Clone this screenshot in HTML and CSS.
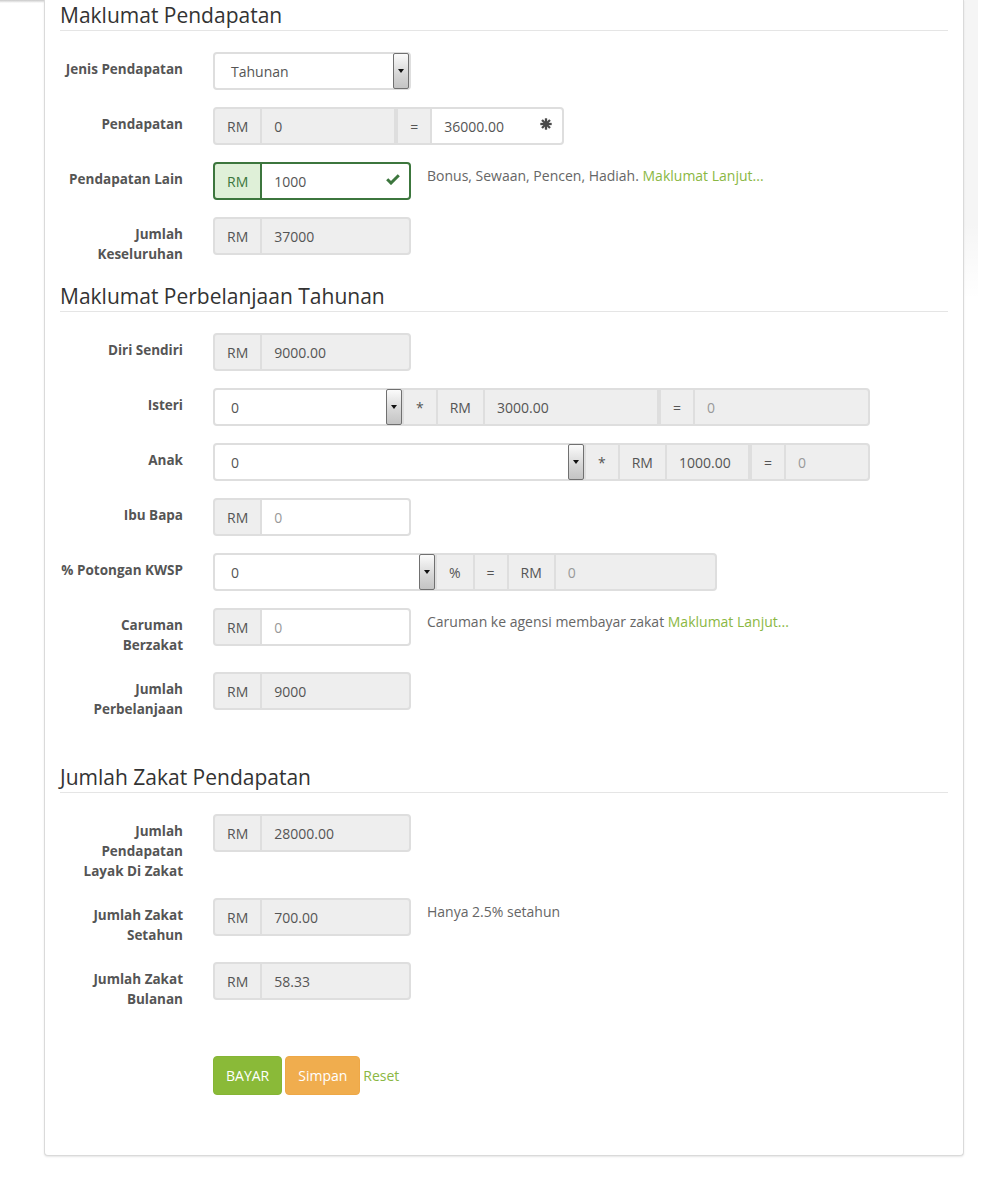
FILE: index.html
```html
<!DOCTYPE html>
<html lang="ms">
<head>
<meta charset="utf-8">
<title>Kalkulator Zakat Pendapatan</title>
<link rel="stylesheet" href="styles.css">
</head>
<body>
<div class="topshade"></div>
<div class="sideshade"></div>
<div class="panel">
  <form class="form">
    <section class="fs">
      <h2 class="legend">Maklumat Pendapatan</h2>

      <div class="row">
        <label class="lbl">Jenis Pendapatan</label>
        <div class="ig w198">
          <div class="seg sel grow"><span>Tahunan</span><span class="dd"><i class="tri"></i></span></div>
        </div>
      </div>

      <div class="row">
        <label class="lbl">Pendapatan</label>
        <div class="ig w351">
          <span class="seg addon">RM</span>
          <span class="seg inp ro i134">0</span>
          <span class="seg addon split">=</span>
          <span class="seg inp grow has-icon">36000.00<span class="ico"><svg width="12" height="12" viewBox="0 0 12 12"><g stroke="#4a4a4a" stroke-width="2.3"><line x1="6" y1="0.3" x2="6" y2="11.7"/><line x1="0.3" y1="6" x2="11.7" y2="6"/><line x1="2" y1="2" x2="10" y2="10"/><line x1="10" y1="2" x2="2" y2="10"/></g></svg></span></span>
        </div>
      </div>

      <div class="row">
        <label class="lbl">Pendapatan Lain</label>
        <div class="ig w198 ok">
          <span class="seg addon">RM</span>
          <span class="seg inp grow has-icon">1000<span class="ico"><svg width="14" height="12" viewBox="0 0 14 12"><path d="M1.2 6.2 L5 10 L12.8 2.2" stroke="#3c763d" stroke-width="3" fill="none"/></svg></span></span>
        </div>
        <p class="help">Bonus, Sewaan, Pencen, Hadiah. <a href="#">Maklumat Lanjut...</a></p>
      </div>

      <div class="row">
        <label class="lbl">Jumlah<br>Keseluruhan</label>
        <div class="ig w198">
          <span class="seg addon">RM</span>
          <span class="seg inp ro grow">37000</span>
        </div>
      </div>
    </section>

    <section class="fs">
      <h2 class="legend">Maklumat Perbelanjaan Tahunan</h2>

      <div class="row">
        <label class="lbl">Diri Sendiri</label>
        <div class="ig w198">
          <span class="seg addon">RM</span>
          <span class="seg inp ro grow">9000.00</span>
        </div>
      </div>

      <div class="row">
        <label class="lbl">Isteri</label>
        <div class="ig w657">
          <div class="seg sel s191"><span>0</span><span class="dd"><i class="tri"></i></span></div>
          <span class="seg addon">*</span>
          <span class="seg addon">RM</span>
          <span class="seg inp ro i174">3000.00</span>
          <span class="seg addon split">=</span>
          <span class="seg inp ro grow ph">0</span>
        </div>
      </div>

      <div class="row">
        <label class="lbl">Anak</label>
        <div class="ig w657">
          <div class="seg sel s373"><span>0</span><span class="dd"><i class="tri"></i></span></div>
          <span class="seg addon">*</span>
          <span class="seg addon">RM</span>
          <span class="seg inp ro i83">1000.00</span>
          <span class="seg addon split">=</span>
          <span class="seg inp ro grow ph">0</span>
        </div>
      </div>

      <div class="row">
        <label class="lbl">Ibu Bapa</label>
        <div class="ig w198">
          <span class="seg addon">RM</span>
          <span class="seg inp grow ph">0</span>
        </div>
      </div>

      <div class="row">
        <label class="lbl">% Potongan KWSP</label>
        <div class="ig w504">
          <div class="seg sel s224"><span>0</span><span class="dd"><i class="tri"></i></span></div>
          <span class="seg addon">%</span>
          <span class="seg addon">=</span>
          <span class="seg addon">RM</span>
          <span class="seg inp ro grow ph">0</span>
        </div>
      </div>

      <div class="row">
        <label class="lbl">Caruman<br>Berzakat</label>
        <div class="ig w198">
          <span class="seg addon">RM</span>
          <span class="seg inp grow ph">0</span>
        </div>
        <p class="help">Caruman ke agensi membayar zakat <a href="#">Maklumat Lanjut...</a></p>
      </div>

      <div class="row">
        <label class="lbl">Jumlah<br>Perbelanjaan</label>
        <div class="ig w198">
          <span class="seg addon">RM</span>
          <span class="seg inp ro grow">9000</span>
        </div>
      </div>
    </section>

    <section class="fs fs-gap">
      <h2 class="legend">Jumlah Zakat Pendapatan</h2>

      <div class="row">
        <label class="lbl">Jumlah<br>Pendapatan<br>Layak Di Zakat</label>
        <div class="ig w198">
          <span class="seg addon">RM</span>
          <span class="seg inp ro grow">28000.00</span>
        </div>
      </div>

      <div class="row">
        <label class="lbl">Jumlah Zakat<br>Setahun</label>
        <div class="ig w198">
          <span class="seg addon">RM</span>
          <span class="seg inp ro grow">700.00</span>
        </div>
        <p class="help">Hanya 2.5% setahun</p>
      </div>

      <div class="row">
        <label class="lbl">Jumlah Zakat<br>Bulanan</label>
        <div class="ig w198">
          <span class="seg addon">RM</span>
          <span class="seg inp ro grow">58.33</span>
        </div>
      </div>
    </section>

    <div class="btns">
      <button type="button" class="btn btn-pay">BAYAR</button>
      <button type="button" class="btn btn-save">Simpan</button>
      <a href="#" class="reset">Reset</a>
    </div>
  </form>
</div>
</body>
</html>
```
FILE: styles.css
```css
* { box-sizing: border-box; }

html, body {
  margin: 0;
  padding: 0;
  background: #fff;
}

body {
  font-family: "Open Sans", "DejaVu Sans", sans-serif;
  font-size: 14px;
  color: #555;
  position: relative;
  min-height: 1202px;
}

.topshade {
  position: absolute;
  left: 0;
  top: 0;
  width: 44px;
  height: 3px;
  background: linear-gradient(#c8c8c8, rgba(200, 200, 200, 0));
}

.sideshade {
  position: absolute;
  left: 964px;
  top: 0;
  width: 14px;
  height: 300px;
  background: linear-gradient(to bottom, rgba(0, 0, 0, 0.04) 75%, rgba(0, 0, 0, 0));
}

.panel {
  margin-left: 44px;
  width: 920px;
  border: 1px solid #dadada;
  border-top: 0;
  border-radius: 0 0 4px 4px;
  box-shadow: 0 1px 2px rgba(0, 0, 0, 0.1);
  background: #fff;
  padding: 0 15px 60px;
}

.form { margin: 0; }

.fs { margin: 0; }
.fs-gap { margin-top: 43px; }

.legend {
  margin: 0 0 21px;
  font-size: 21px;
  line-height: 30px;
  font-weight: 400;
  color: #333;
  border-bottom: 1px solid #e5e5e5;
}

.row {
  display: flex;
  align-items: flex-start;
  margin-bottom: 17px;
}

.lbl {
  flex: none;
  width: 123px;
  margin-right: 30px;
  padding-top: 7px;
  text-align: right;
  white-space: nowrap;
  font-size: 13.5px;
  line-height: 20px;
  font-weight: 700;
  color: #555;
}

.ig {
  flex: none;
  display: flex;
  height: 38px;
}

.w198 { width: 198px; }
.w351 { width: 351px; }
.w504 { width: 504px; }
.w657 { width: 657px; }

.seg {
  display: flex;
  align-items: center;
  border: 2px solid #dedede;
  font-size: 14px;
  color: #555;
  white-space: nowrap;
}

.seg + .seg { border-left: 0; }
.seg.split { border-left: 2px solid #dedede; }

.ig > .seg:first-child { border-radius: 4px 0 0 4px; }
.ig > .seg:last-child { border-radius: 0 4px 4px 0; }
.ig > .seg:only-child { border-radius: 4px; }

.grow { flex: 1 1 0; min-width: 0; }
.i134 { flex: none; width: 134px; }
.i174 { flex: none; width: 174px; }
.i83 { flex: none; width: 83px; }

.addon {
  flex: none;
  justify-content: center;
  padding: 0 12px;
  background: #eee;
}

.inp {
  padding: 0 12px;
  background: #fff;
}

.inp.ro { background: #eee; }
.ph { color: #999; }

.has-icon {
  justify-content: space-between;
  padding-right: 0;
}

.ico {
  width: 32px;
  display: flex;
  justify-content: center;
  align-items: center;
  margin-top: -4px;
}

.sel {
  background: #fff;
  padding-left: 16px;
  justify-content: space-between;
  align-items: stretch;
}

.sel > span:first-child {
  display: flex;
  align-items: center;
}

.s191 { flex: none; width: 191px; }
.s224 { flex: none; width: 224px; }
.s373 { flex: none; width: 373px; }

.dd {
  flex: none;
  width: 16px;
  margin: -1px 0;
  border: 1px solid #707070;
  border-radius: 2px;
  background: linear-gradient(#fbfbfb, #d6d6d6 60%, #c4c4c4);
  display: flex;
  align-items: center;
  justify-content: center;
}

.tri {
  display: block;
  width: 0;
  height: 0;
  border-left: 3.5px solid transparent;
  border-right: 3.5px solid transparent;
  border-top: 4px solid #111;
}

/* success state */
.ok .seg { border-color: #3c763d; }
.ok .addon {
  background: #dff0d8;
  color: #3c763d;
}

.help {
  margin: 0 0 0 16px;
  padding-top: 4px;
  font-size: 14px;
  line-height: 20px;
  color: #666;
}

.help a,
.reset {
  color: #8ab743;
  text-decoration: none;
}

.btns {
  display: flex;
  align-items: center;
  gap: 3px;
  margin: 47px 0 0 153px;
}

.btn {
  height: 39px;
  padding: 0 12px;
  border-radius: 4px;
  font-family: "Open Sans", "DejaVu Sans", sans-serif;
  font-size: 14px;
  color: #fff;
  cursor: pointer;
}

.btn-pay {
  background: #8aba38;
  border: 1px solid #86b535;
}

.btn-save {
  background: #f0ad4e;
  border: 1px solid #eea847;
}

.reset {
  font-size: 14px;
}
```
